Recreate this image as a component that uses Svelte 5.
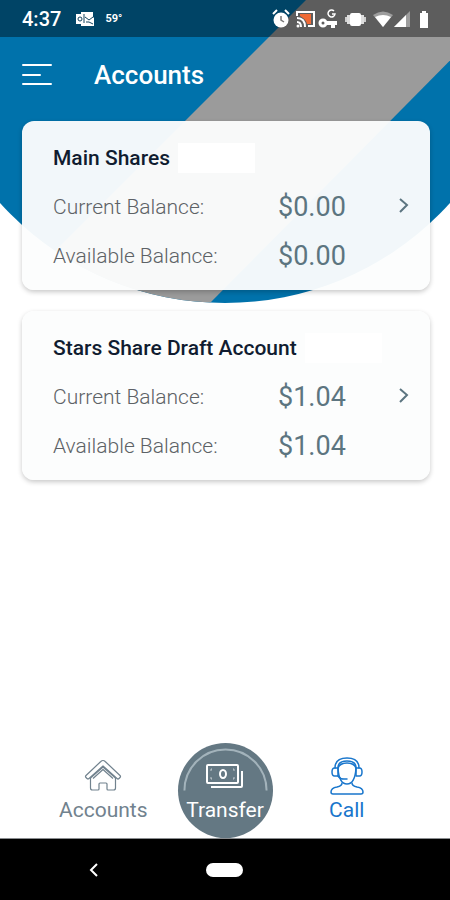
<script>
  const accounts = [
    { name: "Main Shares", current: "$0.00", available: "$0.00" },
    { name: "Stars Share Draft Account", current: "$1.04", available: "$1.04" },
  ];
</script>

<div class="screen">
  <svg class="backdrop" viewBox="0 0 450 303" aria-hidden="true">
    <clipPath id="dome"><circle cx="225" cy="0" r="303" /></clipPath>
    <g clip-path="url(#dome)">
      <rect width="450" height="303" fill="#0072ab" />
      <path d="M306 0H510L210 303H3Z" fill="#9b9b9b" />
    </g>
  </svg>

  <div class="status">
    <span class="time">4:37</span>
    <svg class="mail" width="20" height="16" viewBox="0 0 20 16">
      <path d="M6 1h12v5l1 1v8H6v-2H1V3h5z" fill="#fff" />
      <path d="M10 6l4 3 4-3M11 11h3l4 2" fill="none" stroke="#14445f" />
      <circle cx="5" cy="8" r="2" fill="none" stroke="#14445f" />
      <path d="M9 3v9" stroke="#14445f" />
    </svg>
    <span class="temp">59°</span>
    <svg class="system" width="158" height="24" viewBox="0 0 158 24">
      <g fill="#fff">
        <circle cx="9" cy="13" r="7.500" />
        <path d="M1 7l4-4M13 3l4 4" stroke="#fff" stroke-width="2" />
        <path d="M9 9v4l3 2" fill="none" stroke="#777" stroke-width="1.500" />
        <path d="M28 7h11v10h-4q-1-5-7-8z" fill="#f06a35" />
        <path d="M25 9V5h17v14h-6" fill="none" stroke="#fff" stroke-width="2" />
        <path d="M25 11q8 0 8 9M25 15q4 0 4 5" fill="none" stroke="#fff" stroke-width="2" />
        <circle cx="26" cy="19" r="1.500" />
        <circle cx="51" cy="16" r="3" fill="none" stroke="#fff" stroke-width="3" />
        <path d="M54 14h11v4h-2v3h-4v-3h-5z" />
        <path d="M62 4a3.500 3.500 0 1 0 1 3h-3" fill="none" stroke="#fff" stroke-width="1.500" />
        <rect x="78" y="6" width="11" height="13" rx="2" />
        <path d="M75 8h3v9h-3zM89 8h3v9h-3z" opacity=".8" />
        <path d="M73 10h2v5h-2zM92 10h2v5h-2z" opacity=".7" />
        <path d="M101 8q10-7 20 0L111 20z" opacity=".4" />
        <path d="M103 10q8-4 16 0l-8 10z" />
        <path d="M138 4v16h-16z" opacity=".4" />
        <path d="M134 8v12h-12z" />
        <path d="M148 6h2V4h4v2h2v15h-8z" />
      </g>
    </svg>
  </div>

  <header>
    <button class="menu" aria-label="Menu">
      <svg width="32" height="24" viewBox="0 0 32 24">
        <path d="M2 2H30M2 12H19M2 21H30" stroke="#fff" stroke-width="2" stroke-linecap="round" />
      </svg>
    </button>
    <h1>Accounts</h1>
  </header>

  <main>
    {#each accounts as account}
      <section class="card">
        <div class="details">
          <h2>
            {account.name}
            <span class="mask"></span>
          </h2>
          <dl>
            <dt>Current Balance:</dt>
            <dd>{account.current}</dd>
            <dt>Available Balance:</dt>
            <dd>{account.available}</dd>
          </dl>
        </div>
        <button class="open" aria-label="Open {account.name}">
          <svg width="12" height="16" viewBox="0 0 12 16">
            <path d="M2 2l7 6-7 7" fill="none" stroke="#5c7580" stroke-width="2" />
          </svg>
        </button>
      </section>
    {/each}
  </main>

  <nav class="tabs">
    <a href="#accounts" class="tab">
      <svg width="38" height="34" viewBox="0 0 38 34" fill="none" stroke="#71828e" stroke-width="1.200" stroke-linejoin="round">
        <path d="M19 2.500q1.200 0 2.200 1L36 17.500q1 1 0 2l-1 1q-1 1-2 0L19 8 5 20.500q-1 1-2 0l-1-1q-1-1 0-2L16.800 3.500q1-1 2.200-1z" />
        <path d="M6.500 20v10q0 2 2 2H14q1 0 1-1v-5q0-1 1-1h6q1 0 1 1v5q0 1 1 1h5.500q2 0 2-2V20" />
        <path d="M6.500 20L19 9l12.500 11M9 20.500L19 11.500l10 9" />
      </svg>
      Accounts
    </a>
    <a href="#transfer" class="tab transfer">
      <svg class="arc" viewBox="0 0 96 96" aria-hidden="true">
        <path d="M6.500 48a41.500 41.500 0 0 1 83 0" fill="none" stroke="#a3b3bb" stroke-width="2" />
      </svg>
      <svg width="40" height="28" viewBox="0 0 40 28" fill="none" stroke="#fff" stroke-width="2" stroke-linejoin="round">
        <rect x="2" y="3" width="31" height="18" rx="1" />
        <ellipse cx="18" cy="12" rx="3" ry="4" />
        <path d="M7 7H6v2M6 15v2h1M28 7h1v2M29 15v2h-1" stroke-width="1" opacity=".6" />
        <path d="M6 25h30q1 0 1-1V9" />
      </svg>
      <span>Transfer</span>
    </a>
    <a href="#call" class="tab call">
      <svg width="34" height="40" viewBox="0 0 34 40" fill="none" stroke="#1976cc" stroke-width="1.500" stroke-linejoin="round" stroke-linecap="round">
        <path d="M5 12Q5 2 17 2t12 10M8 12Q8 5 17 5t9 7" />
        <path d="M8 12v8H4.500Q2 20 2 16t2.500-4zM26 12v8h3.500Q32 20 32 16t-2.500-4z" />
        <path d="M8 12q1 16 9 16t9-16q-2-5-9-5t-9 5" />
        <path d="M8 20q2 3 6 3M14 23h3" />
        <path d="M12 27q0 3-5 4-6 1-6 5 0 2 2 2h28q2 0 2-2 0-4-6-5-5-1-5-4" />
      </svg>
      Call
    </a>
  </nav>

  <div class="system-nav">
    <button aria-label="Back">
      <svg width="12" height="16" viewBox="0 0 12 16">
        <path d="M9 2L3 8l6 6" fill="none" stroke="#fff" stroke-width="2" />
      </svg>
    </button>
    <button aria-label="Home"><span class="pill"></span></button>
    <span></span>
  </div>
</div>

<style>
  :global(body) {
    background: #fff;
  }
  .screen {
    position: relative;
    z-index: 0;
    display: flex;
    flex-direction: column;
    min-height: 100vh;
    overflow: hidden;
    font-family: Roboto, "Liberation Sans", sans-serif;
  }
  .backdrop {
    position: absolute;
    top: 0;
    left: 0;
    width: 100%;
    z-index: -1;
  }
  button {
    display: flex;
    padding: 0;
    border: 0;
    background: none;
    cursor: pointer;
  }
  h1,
  h2,
  dl,
  dd {
    margin: 0;
  }

  .status {
    display: flex;
    align-items: center;
    height: 37px;
    padding: 0 20px 0 22px;
    background: rgba(0, 0, 0, 0.4);
    color: #fff;
  }
  .time {
    font-size: 20px;
    font-weight: 500;
  }
  .mail {
    margin-left: 14px;
  }
  .temp {
    margin-left: 10px;
    font-size: 11px;
    font-weight: 700;
  }
  .system {
    margin-left: auto;
  }

  header {
    display: flex;
    align-items: center;
    gap: 41px;
    height: 76px;
    padding: 0 21px;
  }
  h1 {
    color: #fff;
    font-size: 26px;
    font-weight: 500;
  }

  main {
    display: flex;
    flex: 1;
    flex-direction: column;
    gap: 21px;
    padding: 8px 20px 0 22px;
  }
  .card {
    display: flex;
    align-items: center;
    padding: 12px 20px 9px 31px;
    border-radius: 12px;
    background: rgba(252, 253, 253, 0.96);
    box-shadow: 0 2px 5px rgba(0, 0, 0, 0.22);
  }
  .details {
    flex: 1;
  }
  h2 {
    display: flex;
    align-items: center;
    gap: 8px;
    height: 49px;
    color: #101c30;
    font-size: 21px;
    font-weight: 500;
  }
  .mask {
    width: 77px;
    height: 30px;
    background: #fff;
  }
  dl {
    display: grid;
    grid-template-columns: 225px 1fr;
    padding-top: 1px;
    line-height: 49px;
  }
  dt {
    color: #5d6266;
    font-size: 21px;
    font-weight: 300;
  }
  dd {
    color: #5c7580;
    font-size: 27px;
  }
  .open {
    padding-bottom: 4px;
  }

  .tabs {
    display: grid;
    grid-template-columns: 1fr 95px 1fr;
    align-items: end;
    padding: 0 29px;
    border-bottom: 1px solid #8a8d90;
  }
  .tab {
    display: flex;
    flex-direction: column;
    align-items: center;
    gap: 5px;
    padding-bottom: 15px;
    color: #71828e;
    font-size: 21px;
    line-height: 26px;
    text-decoration: none;
  }
  .transfer {
    position: relative;
    box-sizing: border-box;
    height: 95px;
    padding: 19px 0 0;
    gap: 7px;
    border-radius: 50%;
    background: #647883;
    color: #fff;
  }
  .arc {
    position: absolute;
    inset: 0;
  }
  .call {
    gap: 1px;
    color: #1976cc;
  }

  .system-nav {
    display: grid;
    grid-template-columns: 1fr 1fr 1fr;
    align-items: center;
    justify-items: center;
    height: 61px;
    padding: 0 28px;
    background: #000;
  }
  .pill {
    width: 37px;
    height: 14px;
    border-radius: 7px;
    background: #fff;
  }
</style>
